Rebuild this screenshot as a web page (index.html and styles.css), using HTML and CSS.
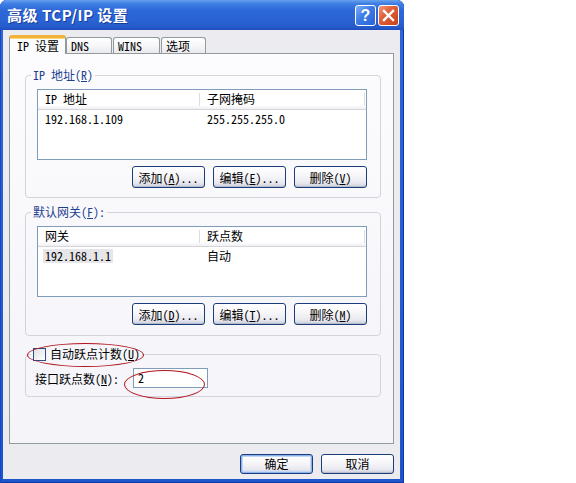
FILE: index.html
```html
<!DOCTYPE html>
<html lang="zh-CN">
<head>
<meta charset="utf-8">
<title>高级 TCP/IP 设置</title>
<link rel="stylesheet" href="styles.css">
</head>
<body>
<div class="window">
  <div class="titlebar">
    <span class="title">高级 TCP/IP 设置</span>
    <div class="tb-btns">
      <span class="tb-btn help">?</span>
      <span class="tb-btn close"><svg width="13" height="13" viewBox="0 0 13 13"><path d="M2 2 L11 11 M11 2 L2 11" stroke="#fff" stroke-width="2.4" stroke-linecap="square"/></svg></span>
    </div>
  </div>
  <div class="client">
    <div class="tabs">
      <div class="tab active t-ip">IP 设置</div>
      <div class="tab t-dns">DNS</div>
      <div class="tab t-wins">WINS</div>
      <div class="tab t-opt">选项</div>
    </div>
    <div class="panel">
      <fieldset class="group g1">
        <legend>IP 地址(<u>R</u>)</legend>
        <div class="gbody">
          <div class="listview">
            <div class="lv-head">
              <div class="hcol c1">IP 地址</div>
              <div class="hcol c2">子网掩码</div>
            </div>
            <div class="lv-row">
              <div class="cell c1"><span>192.168.1.109</span></div>
              <div class="cell c2"><span>255.255.255.0</span></div>
            </div>
          </div>
          <div class="btn-row">
            <button class="btn">添加(<u>A</u>)...</button>
            <button class="btn">编辑(<u>E</u>)...</button>
            <button class="btn">删除(<u>V</u>)</button>
          </div>
        </div>
      </fieldset>

      <fieldset class="group g2">
        <legend>默认网关(<u>F</u>):</legend>
        <div class="gbody">
          <div class="listview">
            <div class="lv-head">
              <div class="hcol c1">网关</div>
              <div class="hcol c2">跃点数</div>
            </div>
            <div class="lv-row">
              <div class="cell c1"><span class="sel">192.168.1.1</span></div>
              <div class="cell c2"><span>自动</span></div>
            </div>
          </div>
          <div class="btn-row">
            <button class="btn">添加(<u>D</u>)...</button>
            <button class="btn">编辑(<u>T</u>)...</button>
            <button class="btn">删除(<u>M</u>)</button>
          </div>
        </div>
      </fieldset>

      <fieldset class="group g3">
        <legend><span class="checkbox"></span><span class="cb-label">自动跃点计数(<u>U</u>)</span></legend>
        <div class="gbody metric">
          <span class="metric-label">接口跃点数(<u>N</u>):</span>
          <span class="input">2</span>
        </div>
      </fieldset>
    </div>
    <div class="footer">
      <button class="btn big default">确定</button>
      <button class="btn big">取消</button>
    </div>
  </div>
  <div class="mark m1"></div>
  <div class="mark m2"></div>
</div>
</body>
</html>
```

FILE: styles.css
```css
html, body {
  margin: 0;
  padding: 0;
  background: #ffffff;
}

body {
  font-family: "Noto Sans Mono CJK SC", "Noto Sans CJK SC", "Liberation Mono", monospace;
  font-size: 12px;
  color: #000;
}

u {
  text-decoration: underline;
  text-underline-offset: 1px;
}

.window {
  position: relative;
  width: 404px;
  height: 483px;
  display: flex;
  flex-direction: column;
  background: linear-gradient(180deg, #2f67d8 0%, #1f55cc 100%);
  border-radius: 7px 7px 0 0;
  box-shadow: inset 1px 0 0 #1648c0, inset -1px 0 0 #0b37a8, inset 0 -1px 0 #0b37a8;
}

.titlebar {
  height: 30px;
  flex: none;
  display: flex;
  align-items: center;
  justify-content: space-between;
  padding: 0 5px 0 7px;
  border-radius: 7px 7px 0 0;
  background: linear-gradient(180deg, #6aa2ee 0%, #3f7fe4 12%, #2c68d9 35%, #2a62d3 70%, #2459c9 92%, #1d4cb8 100%);
}

.title {
  color: #fff;
  font-family: "Noto Sans CJK SC", sans-serif;
  font-weight: bold;
  font-size: 15px;
  letter-spacing: 0.5px;
  text-shadow: 1px 1px 0 #163e9a;
  line-height: 18px;
}

.tb-btns {
  display: flex;
  gap: 2px;
  align-items: center;
}

.tb-btn {
  width: 19px;
  height: 19px;
  border: 1px solid #ffffff;
  border-radius: 3px;
  display: flex;
  align-items: center;
  justify-content: center;
  color: #fff;
}

.help {
  background: linear-gradient(135deg, #7fb0f6 0%, #3c7be6 45%, #2a63d6 100%);
  font-family: "Liberation Sans", sans-serif;
  font-weight: bold;
  font-size: 16px;
  line-height: 19px;
}

.close {
  background: linear-gradient(135deg, #f09a7a 0%, #e0603a 40%, #c8401c 100%);
}

.client {
  flex: 1;
  margin: 0 4px 4px 3px;
  background: #ecebef;
  display: flex;
  flex-direction: column;
  padding: 5px 6px 5px 6px;
}

.tabs {
  display: flex;
  align-items: flex-end;
  height: 18px;
  flex: none;
}

.tab {
  box-sizing: border-box;
  height: 16px;
  border: 1px solid #919b9c;
  border-bottom: none;
  border-radius: 3px 3px 0 0;
  background: linear-gradient(180deg, #ffffff 0%, #f7f7f9 50%, #e9e9ee 100%);
  padding-left: 4px;
  line-height: 15px;
  white-space: nowrap;
  margin-left: 1px;
}

.tab.active {
  position: relative;
  z-index: 1;
  height: 19px;
  margin-bottom: -1px;
  margin-left: 0;
  background: #fcfcfe;
  border-top: 3px solid #f3b33b;
  border-radius: 3px 3px 0 0;
  padding-left: 7px;
  line-height: 15px;
  box-shadow: inset 0 1px 0 #ffd770;
}

.t-ip { width: 57px; }
.t-dns { width: 46px; margin-left: 0; }
.t-wins { width: 47px; }
.t-opt { width: 45px; }

.panel {
  flex: 1;
  border: 1px solid #919b9c;
  background: linear-gradient(180deg, #fcfcfe 0%, #f4f4f9 100%);
  padding: 14px 12px 0 15px;
  display: flex;
  flex-direction: column;
}

.group {
  margin: 0;
  padding: 0;
  border: 1px solid #d3d3dc;
  border-radius: 4px;
  min-inline-size: 0;
}

.group legend {
  margin-left: 5px;
  padding: 0 2px;
  line-height: 14px;
  height: 14px;
  color: #1f3f8f;
  display: flex;
  align-items: center;
}

.g2 { margin-top: 7px; }
.g3 { margin-top: 11px; }

.gbody {
  padding: 7px 13px 9px 11px;
}

.g2 .gbody { padding-bottom: 10px; }

.listview {
  height: 71px;
  box-sizing: border-box;
  border: 1px solid #7f9db9;
  background: #fff;
}

.lv-head {
  display: flex;
  height: 20px;
  box-sizing: border-box;
  border-bottom: 1px solid #d6d5da;
  background: linear-gradient(180deg, #ffffff 0%, #ffffff 80%, #efeff3 100%);
}

.hcol {
  padding-left: 7px;
  box-sizing: border-box;
  color: #000;
}

.c1 { width: 162px; }
.c2 { width: 165px; }

.lv-head .hcol {
  border-right: 1px solid #dcdcdf;
  margin: 3px 0 3px 0;
  line-height: 12px;
}

.lv-row {
  display: flex;
  padding-top: 0;
}

.cell {
  padding-left: 5px;
  box-sizing: border-box;
}

.cell span {
  display: inline-block;
  padding: 0 2px;
  line-height: 13px;
  height: 14px;
}

.cell span.sel {
  background: #e6e6ea;
}

.btn-row {
  display: flex;
  justify-content: flex-end;
  gap: 8px;
  margin-top: 6px;
}

.btn {
  font: inherit;
  color: #000;
  width: 73px;
  height: 22px;
  padding: 0;
  border: 1px solid #1b3d7c;
  border-radius: 3px;
  background: linear-gradient(180deg, #ffffff 0%, #f6f6f9 45%, #e8e8ef 80%, #c9cdda 100%);
  box-shadow: inset 0 -1px 0 #b7bccb;
  text-align: center;
  line-height: 19px;
}

.btn.big {
  width: 73px;
  height: 20px;
  line-height: 16px;
}

.btn.default {
  border-color: #1b3d7c;
  box-shadow: inset 0 0 0 1px #8cb0ec, inset 0 0 0 2px #c3d7f7;
}

.checkbox {
  display: inline-block;
  width: 11px;
  height: 11px;
  border: 1px solid #2a4f86;
  background: linear-gradient(135deg, #e0e0e6 0%, #ffffff 100%);
  margin-left: 0;
}

.cb-label {
  margin-left: 4px;
  color: #000;
}

.g3 legend {
  margin-left: 5px;
}

.metric {
  display: flex;
  align-items: center;
  padding: 7px 13px 8px 9px;
}

.metric-label {
  width: 98px;
}

.input {
  box-sizing: border-box;
  width: 75px;
  height: 20px;
  border: 1px solid #7f9db9;
  background: #fff;
  padding-left: 4px;
  line-height: 17px;
}

.footer {
  display: flex;
  justify-content: flex-end;
  gap: 8px;
  margin-top: 10px;
  flex: none;
}

.mark {
  position: absolute;
  border: 1.5px solid #b0141e;
  border-radius: 50%;
  box-sizing: border-box;
  pointer-events: none;
}

.m1 { left: 27px; top: 343px; width: 117px; height: 24px; }
.m2 { left: 124px; top: 370px; width: 81px; height: 29px; }
```
